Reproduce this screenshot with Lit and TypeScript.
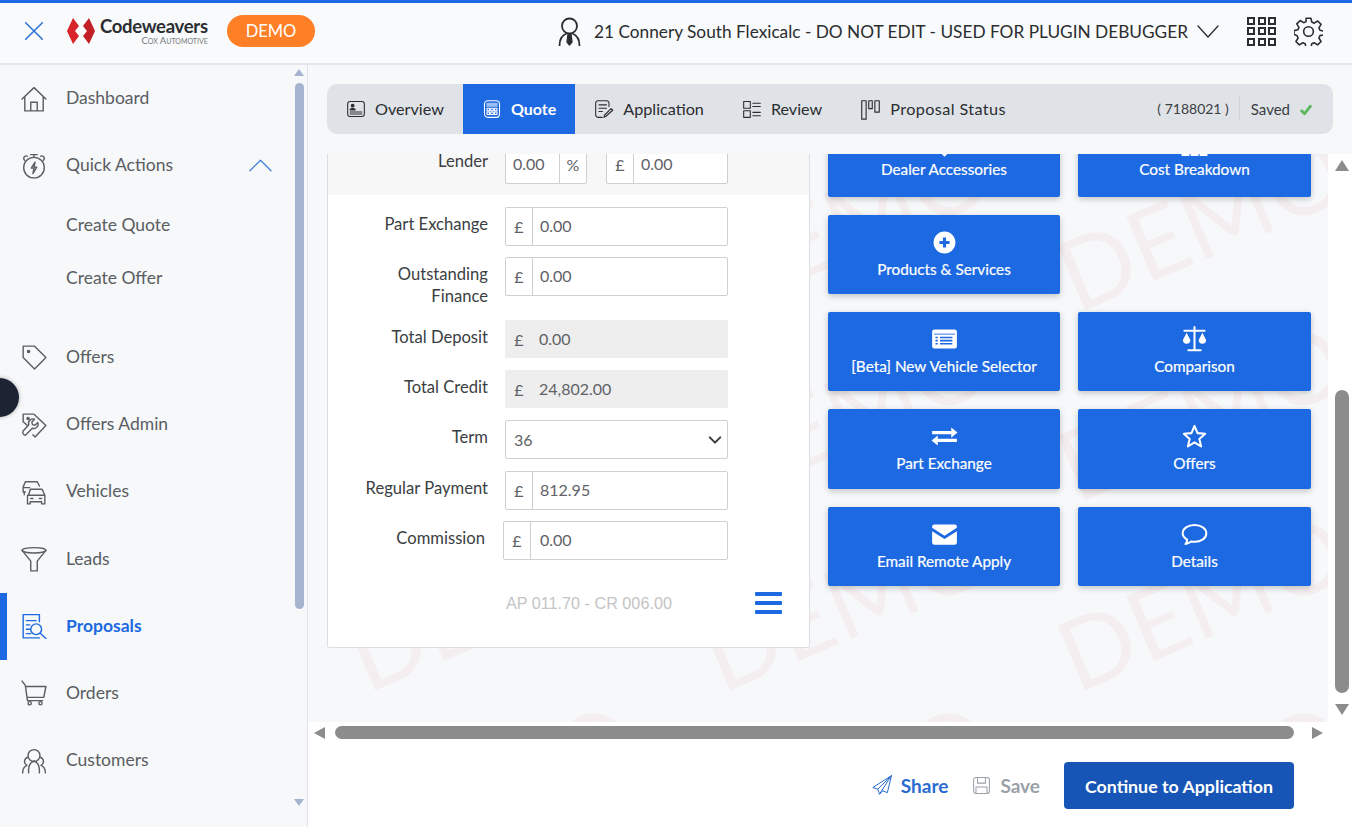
import { LitElement, html, css, svg } from 'lit';
import { customElement } from 'lit/decorators.js';

const icon = (body: unknown, w: number, h = w, vb = '0 0 24 24') => html`
  <svg class="ico" width=${w} height=${h} viewBox=${vb} fill="none" stroke="currentColor" stroke-width="1.3" stroke-linecap="round" stroke-linejoin="round">${body}</svg>`;

const NAV = {
  home: svg`<path d="M1 12 12 1.500 23 12M3.500 10v13h17V10M9 23v-8h6v8"/>`,
  timer: svg`<circle cx="12" cy="13.500" r="9.500"/><path d="M9 1.500h6M12 1.500V4M3.500 7 2.500 5.500a2.400 2.400 0 0 1 3.500-2.500M20.500 7l1-1.500A2.400 2.400 0 0 0 18 3M13 8.500l-3.500 5.500H12l-1 5 3.500-6H12z"/>`,
  tag: svg`<path d="M2 2h10.500L23 12.500 12.500 23 2 12.500z"/><circle cx="7" cy="7" r="1" fill="currentColor"/>`,
  tagWrench: svg`<path d="M6 12.500 2 9V2h10l11 10.500L13 23l-2-2"/><circle cx="6.500" cy="6" r="1" fill="currentColor"/><path d="M4 21.500 10.500 15a4 4 0 0 0 5-5.300l-2.600 2.500-2.300-.6-.6-2.300 2.500-2.600a4 4 0 0 0-5.300 5L2 17.500a2.700 2.700 0 0 0 2 4z"/>`,
  cars: svg`<path d="M4 12H2V7.500L4 2.500h11l2 4M2 8h6M3 12v2.500"/><path d="M7 15l1.500-5.500h11L22 15v8h-3v-2H8.500v2H6v-8zM7 15h14.500M9 18h2M17 18h2"/>`,
  funnel: svg`<ellipse cx="12" cy="4" rx="11" ry="2.500"/><path d="M1 4l8 10v9h6v-9l8-10"/>`,
  proposals: svg`<path d="M17 8V1.500H2V23h15"/><path d="M5 7h9M5 11h3M5 15h3M5 19h4"/><circle cx="14" cy="15" r="5"/><path d="m18 19 5 4.500"/>`,
  cart: svg`<path d="M1 1l3 4 2 14h14M4.500 6H23l-2 10H6"/><circle cx="8" cy="21.500" r="1.500"/><circle cx="18" cy="21.500" r="1.500"/>`,
  people: svg`<circle cx="12" cy="7" r="5.500"/><path d="M6.500 8.500a4 4 0 0 0-1 7.500c-2.500 1-4 3-4 7M17.500 8.500a4 4 0 0 1 1 7.500c2.500 1 4 3 4 7M7 23v-2c0-5 2-8 5-9 3 1 5 4 5 9v2"/>`,
};

const TAB = {
  overview: svg`<rect x="2" y="3" width="20" height="18" rx="3"/><circle cx="8" cy="8" r="1.600" fill="currentColor"/><path d="M5 13c0-2 6-2 6 0zM5 15.500h14M5 18h14" fill="currentColor"/>`,
  quote: svg`<rect x="3" y="2" width="18" height="20" rx="4"/><rect x="6" y="5" width="12" height="3.500" fill="#9cc0f5" stroke="#9cc0f5"/><path d="M6 11h3v3H6zM10.500 11h3v3h-3zM15 11h3v3h-3zM6 15.500h3v3H6zM10.500 15.500h3v3h-3zM15 15.500h3v3h-3z"/>`,
  application: svg`<path d="M18 9V5a3 3 0 0 0-3-3H5a3 3 0 0 0-3 3v14a3 3 0 0 0 3 3h5"/><path d="M6 7h9M6 11h9M6 15h4M14 21l-2 1 .5-2.500 8-8 2 2z"/>`,
  review: svg`<rect x="2" y="3" width="8" height="8"/><rect x="2" y="14" width="8" height="8"/><path d="M13 5h9M13 9h9M13 16h9M13 20h9"/>`,
  status: svg`<rect x="2" y="2" width="5" height="21"/><rect x="10" y="2" width="4" height="9"/><rect x="17" y="2" width="5" height="13"/>`,
};

const TILE = {
  plus: svg`<circle cx="12" cy="12" r="9.700" fill="#fff" stroke="none"/><path d="M12 7.500v9M7.500 12h9" stroke="#1c69e1" stroke-width="2.800" stroke-linecap="butt"/>`,
  list: svg`<rect x="1" y="3" width="22" height="17" rx="2" fill="#fff" stroke="none"/><path d="M3 7.200h18" stroke="#1c69e1" stroke-width=".8"/><path d="M8 10.200h11M8 13h11M8 15.800h11M4 10.200h2M4 13h2M4 15.800h2" stroke="#1c69e1" stroke-width="1.500" stroke-linecap="butt"/>`,
  scale: svg`<path d="M12 1v20M6.500 21.500h11M3 4.200h18" stroke="#fff" stroke-width="1.800"/><path d="M5 6l-3.300 6.500a3.300 3.300 0 0 0 6.600 0zM19 6l-3.300 6.500a3.300 3.300 0 0 0 6.600 0z" fill="#fff" stroke="none"/>`,
  swap: svg`<path d="M1 8.500h18M5 15.500h18" stroke="#fff" stroke-width="2.800" stroke-linecap="butt"/><path d="m18 4 5.500 4.500L18 13zM6 11 .5 15.500 6 20z" fill="#fff" stroke="none"/>`,
  star: svg`<path d="m12 2.500 2.700 6.500 6.800.6-5.200 4.600 1.600 6.700L12 17.200l-5.900 3.700 1.600-6.700-5.200-4.600 6.800-.6z" stroke="#fff" stroke-width="1.800"/>`,
  mail: svg`<path d="M3 3h18a2 2 0 0 1 2 2v1l-11 7L1 6V5a2 2 0 0 1 2-2zM1 9l11 7 11-7v10a2 2 0 0 1-2 2H3a2 2 0 0 1-2-2z" fill="#fff" stroke="none"/>`,
  chat: svg`<path d="M12 3.500c6 0 10.500 3.200 10.500 7.500s-4.500 7.500-10.500 7.500c-1 0-2 0-3-.3-1.500 1.300-3 2-5 2.300 1-1.300 1.500-2.500 1.500-4C3 15 1.500 13.200 1.500 11c0-4.300 4.500-7.500 10.500-7.500z" stroke="#fff" stroke-width="1.800"/>`,
  tag: svg`<path d="m12 22-6-6 6-6 6 6z" fill="#fff" stroke="none"/>`,
  calc: svg`<path d="M.5 15h7v6.300h-7zM8.500 15h7v6.300h-7zM16.500 15h7v6.300h-7z" fill="#fff" stroke="none"/>`,
};

const tiles = [
  { label: 'Dealer Accessories', i: TILE.tag, top: true },
  { label: 'Cost Breakdown', i: TILE.calc, top: true },
  { label: 'Products & Services', i: TILE.plus },
  null,
  { label: '[Beta] New Vehicle Selector', i: TILE.list },
  { label: 'Comparison', i: TILE.scale },
  { label: 'Part Exchange', i: TILE.swap },
  { label: 'Offers', i: TILE.star },
  { label: 'Email Remote Apply', i: TILE.mail },
  { label: 'Details', i: TILE.chat },
];

@customElement('app-root')
export class AppRoot extends LitElement {
  static styles = css`
    :host {
      display: grid;
      grid-template-columns: 308px 1fr;
      grid-template-rows: 65px 762px;
      height: 827px;
      overflow: hidden;
      position: relative;
      font-family: 'Lato', 'Noto Sans', sans-serif;
      color: #4a4d52;
      background: #f6f8fa;
    }
    .ico { display: block; flex: none; }

    .topbar {
      grid-column: 1 / 3;
      display: flex;
      align-items: center;
      box-sizing: border-box;
      border-top: 3px solid #1c69e1;
      border-bottom: 2px solid #e3e5e8;
      background: #f8fafb;
      padding: 0 29px 4px 24px;
    }
    .close { color: #2a6fd6; }
    .logo { display: flex; align-items: center; margin-left: 23px; width: 142px; }
    .brand { margin-left: 5px; text-align: right; line-height: 1; }
    .brand b { display: block; font-size: 18.500px; font-weight: 700; color: #2b2d30; letter-spacing: -.3px; }
    .brand small { display: block; font-size: 9.500px; color: #77797c; font-variant: small-caps; margin-top: 1px; }
    .pill {
      margin-left: 18px; width: 88px; height: 32px; border-radius: 16px;
      background: #ff7f27; color: #fff; font-size: 16.500px;
      display: flex; align-items: center; justify-content: center;
    }
    .dealer { margin-left: auto; display: flex; align-items: center; color: #2b2d30; }
    .dealer span { font-size: 17.250px; margin: 0 9px 0 12px; white-space: nowrap; }
    .apps { margin-left: 28px; display: grid; grid-template-columns: repeat(3, 8px); grid-auto-rows: 8px; gap: 2.500px; }
    .apps i { border: 2px solid #2b2d30; box-sizing: border-box; }
    .gear { margin-left: 18px; color: #2b2d30; }

    .side { display: flex; background: #f6f8fa; border-right: 1px solid #dfe2e6; overflow: hidden; }
    nav { flex: 1; }
    .item { height: 67.200px; display: flex; align-items: center; padding-left: 21px; gap: 19px; font-size: 17.500px; color: #5a5d62; position: relative; }
    .item > span:not(.up) { padding-bottom: 2px; }
    .item.active { color: #1c69e1; font-weight: 700; }
    .item.active::before { content: ''; position: absolute; left: 0; top: 0; bottom: 0; width: 7px; background: #1c69e1; }
    .item .up { margin-left: 57px; color: #3d80dc; }
    .subs { margin-bottom: 18.500px; }
    .sub { height: 53px; display: flex; align-items: center; padding: 0 0 2px 66px; box-sizing: border-box; font-size: 17.500px; color: #5a5d62; }
    .sbar { width: 12px; margin-right: 2px; display: flex; flex-direction: column; align-items: center; padding-top: 4px; }
    .sbar .thumb { width: 9px; height: 526px; margin-top: 7px; border-radius: 5px; background: #a6b4cf; }
    .sbar .dn { margin-top: auto; margin-bottom: 21px; }
    .u, .dn, .l, .r { width: 0; height: 0; border-style: solid; border-color: transparent; }
    .sbar .u { border-width: 0 5px 7px; border-bottom-color: #a6b4cf; }
    .sbar .dn { border-width: 7px 5px 0; border-top-color: #a6b4cf; }

    .dot { position: absolute; left: -20px; top: 378px; width: 39px; height: 39px; border-radius: 50%; background: #1c2333; box-shadow: 0 0 4px rgba(0,0,0,.3); }

    main { display: flex; flex-direction: column; min-width: 0; background: #fff; }
    .tabwrap { background: #f6f8fa; padding: 19px 19px 20px; }
    .tabs { height: 50px; display: flex; align-items: stretch; background: #dfe3e8; border-radius: 10px; overflow: hidden; color: #2b2d30; font-size: 16.200px; }
    .tab { display: flex; align-items: center; gap: 9px; padding: 0 19px 2px; }
    .tab .ico { margin-top: 2px; }
    .tab.on { background: #1c69e1; color: #fff; font-weight: 700; font-size: 16px; }
    .tab.last { letter-spacing: .4px; }
    .tabs .meta { margin-left: auto; display: flex; align-items: center; font-size: 15px; padding-right: 21px; color: #3b3e42; }
    .meta em { font-style: normal; font-size: 14px; padding-right: 10px; border-right: 1px solid #cdd1d6; line-height: 24px; }
    .meta span { margin-left: 11px; }
    .meta svg { margin-left: 9px; color: #5cb85c; }

    .scroll { flex: 1; display: flex; min-height: 0; }
    .view { flex: 1; position: relative; overflow: hidden; background: #f6f8fa; }
    .marks { position: absolute; left: -350px; top: -29px; display: grid; grid-template-columns: repeat(4, 355px); grid-auto-rows: 190px; }
    .marks span { display: flex; align-items: center; justify-content: center; font-size: 98px; font-weight: 400; color: rgba(230, 60, 60, .05); transform: rotate(-23deg); }
    .inner { position: relative; display: flex; gap: 18px; padding-left: 19px; margin-top: -36px; align-items: flex-start; }

    .card { width: 483px; box-sizing: border-box; background: #fff; border: 1px solid #dcdee1; border-radius: 2px; font-size: 16px; color: #3b3e42; }
    .lender { height: 76px; background: #f7f7f7; padding-top: 26px; box-sizing: border-box; display: flex; }
    .lab { width: 160px; margin-right: 17px; text-align: right; line-height: 22px; padding-top: 6px; box-sizing: border-box; flex: none; font-size: 16.600px; }
    .lender .lab { padding-top: 5px; }
    .rows { padding-top: 12px; }
    .row { height: 50px; display: flex; }
    .row.tall { height: 63px; }
    .row.term { height: 51px; }
    .row.wide .lab { width: 157px; margin-right: 18px; }
    .row.wide .ctl { width: 225px; }
    .row.wide .val { padding-left: 9px; }
    .ctl { width: 223px; height: 39px; box-sizing: border-box; display: flex; align-items: center; background: #fff; border: 1px solid #cfcfcf; border-radius: 2px; color: #5f6266; }
    .ctl .pre { width: 26px; align-self: stretch; display: flex; align-items: center; justify-content: center; border-right: 1px solid #cfcfcf; flex: none; }
    .ctl .val { padding: 0 0 2px 7px; }
    .ctl.off .val { padding-bottom: 1px; }
    .ctl.off { height: 38px; background: #eee; border-color: #eee; }
    .ctl.off .pre { border-right: 0; }
    .ctl.sel { justify-content: space-between; padding: 0 5px 0 8px; }
    .ctl.pct { width: 82px; margin-right: 19px; justify-content: space-between; }
    .ctl.pct .pre { border-right: 0; border-left: 1px solid #cfcfcf; }
    .ctl.gbp { width: 122px; }
    .foot { display: flex; align-items: center; justify-content: space-between; padding: 21px 27px 33px 178px; }
    .apr { font-family: 'Liberation Sans', sans-serif; color: #c4c4c4; font-size: 16.200px; }
    .burger { width: 27px; height: 22px; display: flex; flex-direction: column; justify-content: space-between; }
    .burger i { height: 4px; background: #1c69e1; border-radius: 1px; }

    .tiles { display: grid; grid-template-columns: 232px 233px; grid-template-rows: 79px 79px 79px 80px 79px; gap: 18px; }
    .tile { background: #1c69e1; color: #fff; border-radius: 2px; box-shadow: 0 2px 6px rgba(0,0,0,.22); display: flex; flex-direction: column; align-items: center; padding-top: 14px; box-sizing: border-box; font-size: 15.300px; }
    .tile b { font-weight: 400; line-height: 22px; margin-top: 2px; -webkit-text-stroke: .2px #fff; }
    .tile.top b { margin-top: -1px; }

    .vbar { width: 24px; display: flex; flex-direction: column; align-items: center; padding: 6px 0 0 3px; box-sizing: border-box; background: #fff; }
    .vbar .u { border-width: 0 7.500px 11px; border-bottom-color: #8c8c8c; }
    .vbar .thumb { width: 14px; height: 303px; margin-top: 219px; border-radius: 7px; background: #8c8c8c; }
    .vbar .dn { border-width: 11px 7.500px 0; border-top-color: #8c8c8c; margin-top: 11px; }
    .hbar { height: 23px; display: flex; align-items: center; padding: 0 0 2px 6px; box-sizing: border-box; background: #fff; }
    .hbar .l { border-width: 6.500px 11px 6.500px 0; border-right-color: #8c8c8c; }
    .hbar .thumb { width: 959px; height: 13px; margin-left: 10px; border-radius: 7px; background: #8c8c8c; }
    .hbar .r { border-width: 6.500px 0 6.500px 11px; border-left-color: #8c8c8c; margin-left: 18px; }

    .actions { height: 82px; display: flex; align-items: center; justify-content: flex-end; padding: 0 58px 1px 0; box-sizing: border-box; font-weight: 700; font-size: 19px; }
    .act { display: flex; align-items: center; gap: 9px; padding-bottom: 1px; }
    .act.share { color: #2a6bd0; }
    .act.save { color: #9aa0a8; margin: 0 24px; }
    .go { width: 230px; height: 47px; border-radius: 4px; background: #1655b5; color: #fff; font-size: 17.800px; display: flex; align-items: center; justify-content: center; }
  `;

  private renderNav(label: string, d: unknown, active = false) {
    return html`<div class="item ${active ? 'active' : ''}">${icon(d, 26)}<span>${label}</span></div>`;
  }

  private renderMoney(value: string, off = false) {
    return html`<div class="ctl ${off ? 'off' : ''}"><div class="pre">£</div><div class="val">${value}</div></div>`;
  }

  render() {
    return html`
      <header class="topbar">
        <div class="close">${icon(svg`<path d="M2 2l20 20M22 2 2 22" stroke-width="1.800"/>`, 20)}</div>
        <div class="logo">
          <svg width="28" height="26" viewBox="0 0 28 26">
            <path d="M6 0 12 8 8 13l4 5-6 8L0 13z" fill="#d8232a"/>
            <path d="M22 0 28 13 22 26l-6-8 4-5-4-5z" fill="#c21f26"/>
          </svg>
          <div class="brand"><b>Codeweavers</b><small>Cox Automotive</small></div>
        </div>
        <div class="pill">DEMO</div>
        <div class="dealer">
          ${icon(svg`<circle cx="12" cy="9" r="7.500" stroke-width="1.800"/><path d="M2 29c0-7 3-11 7-12.500M22 29c0-7-3-11-7-12.500" stroke-width="1.800"/><path d="M10.500 17h3l1 8-2.500 3-2.500-3z" fill="currentColor"/>`, 25, 29, '0 0 24 29')}
          <span>21 Connery South Flexicalc - DO NOT EDIT - USED FOR PLUGIN DEBUGGER</span>
          ${icon(svg`<path d="m1 2 10 11L21 2"/>`, 22, 15, '0 0 22 15')}
        </div>
        <div class="apps">${Array.from({ length: 9 }, () => html`<i></i>`)}</div>
        <div class="gear">
          ${icon(svg`<circle cx="12" cy="12" r="4"/><path d="M10 1h4l.7 3.200 2 .9L19.600 3.300l2.800 2.800-1.800 2.900.9 2 3.200.7v3l-3.200.7-.9 2 1.800 2.900-2.800 2.800-2.900-1.800-2 .9-.7 3.200h-4l-.7-3.200-2-.9-2.900 1.800-2.800-2.800 1.800-2.900-.9-2L0 14.300v-3l3.200-.7.900-2L2.300 5.700 5.100 2.900 8 4.700l2-.9z"/>`, 29)}
        </div>
      </header>

      <aside class="side">
        <nav>
          ${this.renderNav('Dashboard', NAV.home)}
          <div class="item">${icon(NAV.timer, 26)}<span>Quick Actions</span>
            <span class="up">${icon(svg`<path d="M1 12 12 1l11 11"/>`, 23, 13, '0 0 24 13')}</span>
          </div>
          <div class="subs">
            <div class="sub">Create Quote</div>
            <div class="sub">Create Offer</div>
          </div>
          ${this.renderNav('Offers', NAV.tag)}
          ${this.renderNav('Offers Admin', NAV.tagWrench)}
          ${this.renderNav('Vehicles', NAV.cars)}
          ${this.renderNav('Leads', NAV.funnel)}
          ${this.renderNav('Proposals', NAV.proposals, true)}
          ${this.renderNav('Orders', NAV.cart)}
          ${this.renderNav('Customers', NAV.people)}
        </nav>
        <div class="sbar"><div class="u"></div><div class="thumb"></div><div class="dn"></div></div>
      </aside>

      <main>
        <div class="tabwrap">
          <div class="tabs">
            <div class="tab">${icon(TAB.overview, 20)}Overview</div>
            <div class="tab on">${icon(TAB.quote, 20)}Quote</div>
            <div class="tab">${icon(TAB.application, 20)}Application</div>
            <div class="tab">${icon(TAB.review, 20)}Review</div>
            <div class="tab last">${icon(TAB.status, 21)}Proposal Status</div>
            <div class="meta">
              <em>( 7188021 )</em><span>Saved</span>
              ${icon(svg`<path d="m2 7 4 4 7-9" stroke-width="3" stroke-linecap="butt"/>`, 13, 13, '0 0 14 13')}
            </div>
          </div>
        </div>
        <div class="scroll">
          <div class="view">
            <div class="marks">${Array.from({ length: 16 }, () => html`<span>DEMO</span>`)}</div>
            <div class="inner">
              <section class="card">
                <div class="lender">
                  <div class="lab">Lender</div>
                  <div class="ctl pct"><div class="val">0.00</div><div class="pre">%</div></div>
                  <div class="ctl gbp"><div class="pre">£</div><div class="val">0.00</div></div>
                </div>
                <div class="rows">
                  <div class="row"><div class="lab">Part Exchange</div>${this.renderMoney('0.00')}</div>
                  <div class="row tall"><div class="lab">Outstanding<br />Finance</div>${this.renderMoney('0.00')}</div>
                  <div class="row"><div class="lab">Total Deposit</div>${this.renderMoney('0.00', true)}</div>
                  <div class="row"><div class="lab">Total Credit</div>${this.renderMoney('24,802.00', true)}</div>
                  <div class="row term"><div class="lab">Term</div>
                    <div class="ctl sel"><span>36</span>${icon(svg`<path d="m2 3 6 6 6-6" stroke-width="2.400" stroke="#3b3e42"/>`, 14, 12, '0 0 16 12')}</div>
                  </div>
                  <div class="row"><div class="lab">Regular Payment</div>${this.renderMoney('812.95')}</div>
                  <div class="row wide"><div class="lab">Commission</div>${this.renderMoney('0.00')}</div>
                </div>
                <div class="foot">
                  <span class="apr">AP 011.70 - CR 006.00</span>
                  <div class="burger"><i></i><i></i><i></i></div>
                </div>
              </section>
              <section class="tiles">
                ${tiles.map((t) => (t ? html`<div class="tile ${t.top ? 'top' : ''}">${icon(t.i, 27)}<b>${t.label}</b></div>` : html`<div></div>`))}
              </section>
            </div>
          </div>
          <div class="vbar"><div class="u"></div><div class="thumb"></div><div class="dn"></div></div>
        </div>
        <div class="hbar"><div class="l"></div><div class="thumb"></div><div class="r"></div></div>
        <div class="actions">
          <div class="act share">${icon(svg`<path d="M23 1 1 15l6 2 2 6 4-4 5 2zM23 1 7 17M23 1 9 23" stroke-width="1.200"/>`, 20)}Share</div>
          <div class="act save">${icon(svg`<rect x="2" y="2" width="20" height="20" rx="3"/><path d="M7 2v7h10V2M5 22v-8h14v8"/>`, 19)}Save</div>
          <div class="go">Continue to Application</div>
        </div>
      </main>

      <div class="dot"></div>
    `;
  }
}

declare global {
  interface HTMLElementTagNameMap {
    'app-root': AppRoot;
  }
}
